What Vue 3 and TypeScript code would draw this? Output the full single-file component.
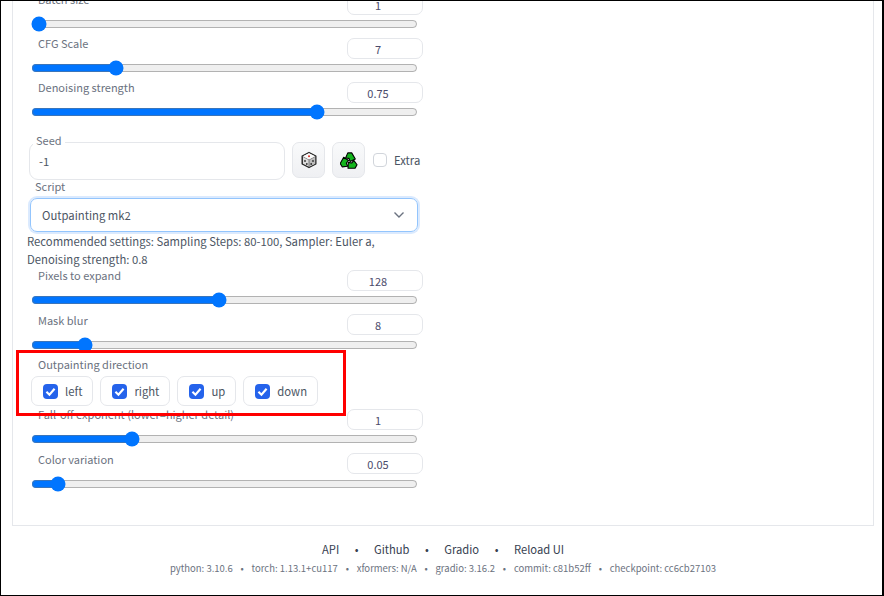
<script setup lang="ts">
interface Slider { label: string; value: number; min: number; max: number; step: number; text: string }

const topSliders: Slider[] = [
  { label: 'Batch size', value: 1, min: 1, max: 8, step: 1, text: '1' },
  { label: 'CFG Scale', value: 7, min: 1, max: 30, step: 0.5, text: '7' },
  { label: 'Denoising strength', value: 0.75, min: 0, max: 1, step: 0.01, text: '0.75' },
]
const midSliders: Slider[] = [
  { label: 'Pixels to expand', value: 128, min: 8, max: 256, step: 8, text: '128' },
  { label: 'Mask blur', value: 8, min: 0, max: 64, step: 1, text: '8' },
]
const endSliders: Slider[] = [
  { label: 'Fall-off exponent (lower=higher detail)', value: 1, min: 0, max: 4, step: 0.01, text: '1' },
  { label: 'Color variation', value: 0.05, min: 0, max: 1, step: 0.01, text: '0.05' },
]
const directions = ['left', 'right', 'up', 'down']
const links = ['API', 'Github', 'Gradio', 'Reload UI']
const versions = ['python: 3.10.6', 'torch: 1.13.1+cu117', 'xformers: N/A', 'gradio: 3.16.2', 'commit: c81b52ff', 'checkpoint: cc6cb27103']
const arrowTurns = [0, 120, 240]
</script>

<template>
  <div class="frame">
    <main class="panel">
      <div class="column">
        <div class="slider batch">
          <div class="slider-head"><span class="label">{{ topSliders[0].label }}</span><input class="num" :value="topSliders[0].text" /></div>
          <input class="range" type="range" :min="topSliders[0].min" :max="topSliders[0].max" :step="topSliders[0].step" :value="topSliders[0].value" />
        </div>
        <div v-for="s in topSliders.slice(1)" :key="s.label" class="slider">
          <div class="slider-head"><span class="label">{{ s.label }}</span><input class="num" :value="s.text" /></div>
          <input class="range" type="range" :min="s.min" :max="s.max" :step="s.step" :value="s.value" />
        </div>

        <div class="seed-row">
          <div class="seed-box">
            <span class="seed-label">Seed</span>
            <span class="seed-value">-1</span>
          </div>
          <button class="tool">
            <svg width="18" height="18" viewBox="0 0 18 18">
              <path d="M9 1.5 15.8 5v8L9 16.5 2.2 13V5Z" fill="#dcdcdc" stroke="#222" stroke-width="1.4" stroke-linejoin="round" />
              <path d="M9 8.8 15.2 5.5v7.2L9 15.8Z" fill="#bdbdbd" />
              <path d="M2.4 5.2 9 8.8l6.6-3.6M9 8.8v7.4" fill="none" stroke="#555" stroke-width="0.7" />
              <path d="M9 2.3 15 5.2 9 8.4 3 5.2Z" fill="#fbfbfb" />
              <circle cx="9" cy="5.2" r="1" fill="#d8342c" />
              <circle cx="5" cy="10" r=".9" fill="#333" />
              <circle cx="6.8" cy="13" r=".9" fill="#333" />
              <circle cx="13" cy="10" r=".9" fill="#333" />
              <circle cx="11.2" cy="13" r=".9" fill="#333" />
            </svg>
          </button>
          <button class="tool">
            <svg width="18" height="18" viewBox="-1 -1 18 18">
              <path v-for="t in arrowTurns" :key="t" :transform="`rotate(${t} 8 9.5)`" d="M4.6 6 6.8.9h3.9L14.3 7 9.1 9.6 8 6.4Z" fill="#12b41c" stroke="#000" stroke-width="1.1" stroke-linejoin="round" />
            </svg>
          </button>
          <label class="extra"><span class="box"></span><span>Extra</span></label>
        </div>

        <div class="script">
          <span class="label">Script</span>
          <div class="select"><span>Outpainting mk2</span>
            <svg width="12" height="8" viewBox="0 0 12 8"><path d="M1.5 1.5 6 6l4.5-4.5" fill="none" stroke="#6b7280" stroke-width="1.4" /></svg>
          </div>
        </div>
        <p class="note">Recommended settings: Sampling Steps: 80-100, Sampler: Euler a,<br />Denoising strength: 0.8</p>

        <div v-for="(s, i) in midSliders" :key="s.label" class="slider" :class="{ lower: i === 1 }">
          <div class="slider-head"><span class="label">{{ s.label }}</span><input class="num" :value="s.text" /></div>
          <input class="range" type="range" :min="s.min" :max="s.max" :step="s.step" :value="s.value" />
        </div>

        <div class="direction">
          <span class="label">Outpainting direction</span>
          <div class="checks">
            <label v-for="d in directions" :key="d" class="check">
              <span class="tick">
                <svg width="15" height="15" viewBox="0 0 14 14"><path d="M3.2 7.3 6 10l4.8-5.6" fill="none" stroke="#fff" stroke-width="2" /></svg>
              </span>
              <span>{{ d }}</span>
            </label>
          </div>
        </div>

        <div v-for="(s, i) in endSliders" :key="s.label" class="slider" :class="{ lower: i === 1 }">
          <div class="slider-head"><span class="label">{{ s.label }}</span><input class="num" :value="s.text" /></div>
          <input class="range" type="range" :min="s.min" :max="s.max" :step="s.step" :value="s.value" />
        </div>
      </div>
      <div class="highlight"></div>
    </main>
    <footer class="footer">
      <div class="links">
        <template v-for="(l, i) in links" :key="l">
          <span v-if="i" class="dot">•</span><span>{{ l }}</span>
        </template>
      </div>
      <div class="versions">
        <template v-for="(v, i) in versions" :key="v">
          <span v-if="i" class="vdot">•</span><span>{{ v }}</span>
        </template>
      </div>
    </footer>
  </div>
</template>

<style>
html, body { margin: 0; background: #fff; }
</style>

<style scoped>
.frame {
  box-sizing: border-box;
  width: 884px;
  height: 596px;
  border: solid #000;
  border-width: 1px 2px 1px 1px;
  overflow: hidden;
  display: flex;
  flex-direction: column;
  background: #fff;
  font-family: "Noto Sans CJK JP", "Noto Sans", sans-serif;
  font-size: 11.3px;
  color: #374151;
}
.panel {
  position: relative;
  box-sizing: border-box;
  height: 525px;
  margin: 0 8px 0 11px;
  border: solid #e5e7eb;
  border-width: 0 1px 1px 1px;
  overflow: hidden;
}
.column {
  width: 410px;
  padding-left: 18px;
}
.slider { height: 44px; width: 392px; }
.batch { margin-top: -7px; }
.slider-head {
  height: 21px;
  display: flex;
  justify-content: space-between;
  align-items: flex-start;
}
.label {
  color: #6b7280;
  font-size: 11px;
  line-height: 14px;
  margin-top: -2px;
  padding-left: 7px;
  white-space: nowrap;
}
.lower .label { margin-top: -1px; }
.lower .range { margin-top: 2px; }
.num {
  box-sizing: border-box;
  width: 76px;
  height: 21px;
  border: 1px solid #e5e7eb;
  border-radius: 7px;
  background: #fff;
  padding: 0 14px 0 0;
  text-align: center;
  font: inherit;
  font-size: 11px;
  color: #4b4b6b;
  outline: none;
}
.range {
  display: block;
  width: 387px;
  margin: 1px 0 0 0;
  height: 16px;
}
.seed-row {
  display: flex;
  align-items: flex-start;
  width: 410px;
  margin: 16px 0 0 -2px;
}
.seed-box {
  position: relative;
  box-sizing: border-box;
  width: 256px;
  height: 38px;
  border: 1px solid #e5e7eb;
  border-radius: 9px;
  display: flex;
  align-items: center;
  padding-left: 9px;
}
.seed-label {
  position: absolute;
  left: 3px;
  top: -10px;
  padding: 0 3px;
  background: #fff;
  color: #6b7280;
  font-size: 11px;
  line-height: 14px;
}
.seed-value { color: #4b5563; font-size: 11.3px; }
.tool {
  box-sizing: border-box;
  width: 33px;
  height: 36px;
  margin-left: 7px;
  padding: 0;
  border: 1px solid #e5e7eb;
  border-radius: 7px;
  background: linear-gradient(to bottom, #f9fafb, #eff0f3);
  display: flex;
  align-items: center;
  justify-content: center;
}
.extra {
  display: flex;
  align-items: center;
  height: 36px;
  margin-left: 8px;
  color: #4b5563;
  white-space: nowrap;
}
.box {
  box-sizing: border-box;
  width: 14px;
  height: 14px;
  margin-right: 7px;
  border: 1px solid #d1d5db;
  border-radius: 4px;
  background: #fff;
}
.script .label { display: block; margin: -1px 0 5px -3px; }
.select {
  box-sizing: border-box;
  width: 388px;
  height: 34px;
  margin-left: -1px;
  padding: 0 12px 0 11px;
  border: 1px solid #93c5fd;
  border-radius: 7px;
  box-shadow: 0 0 0 2px #dbeafe;
  display: flex;
  align-items: center;
  justify-content: space-between;
  color: #4b5563;
}
.note {
  margin: 0 0 2px -4px;
  width: 400px;
  font-size: 11.3px;
  line-height: 18px;
  color: #4b5563;
}
.direction { height: 52px; }
.direction .label { display: block; margin-top: -1px; }
.checks { display: flex; gap: 7px; margin-top: 5px; position: relative; z-index: 1; }
.check {
  box-sizing: border-box;
  height: 30px;
  padding: 0 10px 0 11px;
  border: 1px solid #e5e7eb;
  border-radius: 7px;
  background: #fff;
  display: flex;
  align-items: center;
  gap: 7px;
  color: #4b5563;
}
.tick {
  width: 15px;
  height: 15px;
  border-radius: 4px;
  background: #2563eb;
  display: flex;
}
.highlight {
  position: absolute;
  left: 3px;
  top: 349px;
  width: 330px;
  height: 66px;
  box-sizing: border-box;
  border: 3px solid #f00;
  z-index: 2;
}
.footer { flex: 1; text-align: center; padding: 15px 0 0 3px; }
.links {
  display: flex;
  justify-content: center;
  gap: 15.5px;
  font-size: 11.2px;
  line-height: 17px;
  color: #374151;
}
.versions {
  display: flex;
  justify-content: center;
  gap: 7.8px;
  margin-top: 3px;
  font-size: 9.5px;
  line-height: 14px;
  color: #6b7280;
}
</style>
